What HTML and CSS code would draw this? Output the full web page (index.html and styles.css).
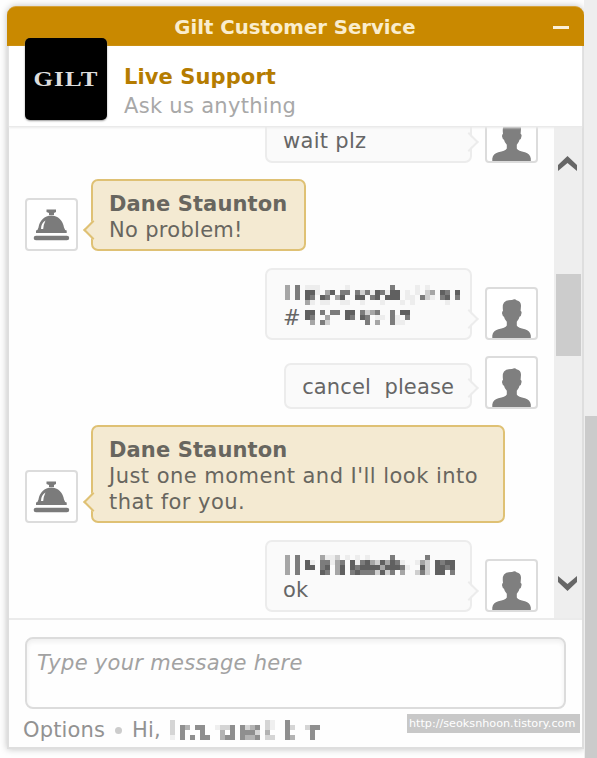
FILE: index.html
```html
<!DOCTYPE html>
<html lang="en">
<head>
<meta charset="utf-8">
<title>Gilt Customer Service</title>
<link rel="stylesheet" href="styles.css">
</head>
<body>
<svg class="defs" width="0" height="0">
  <symbol id="bell" viewBox="0 0 49 49">
    <path fill="#7b7b7b" d="M19.500 9.500h9.500v2.500l-2 1v2h-5v-2l-2.500-1zM9 33v-2.500q2-.5 2.500-3c1-7 6-12 12.800-12S36 20.500 37 27.500q.5 2.500 2.700 3V33z"/>
    <path d="M14 29q0-6 4.500-8.500-2 4-2.300 8.500z" fill="#fff"/>
    <rect x="6.700" y="35.700" width="35.500" height="4.600" rx="2.300" fill="#7b7b7b"/>
  </symbol>
  <symbol id="person" viewBox="0 0 49 49">
    <path fill="#7f7f7f" d="M5.300 49v-2.500q.7-5 6-6.300 7-1.200 8.500-3.700v-3.700q-2.300-2.300-2.800-5-1.500-.5-2-3.500 0-2 1-2.500-.8-6 1-8.300 2-2.500 8-2.500 3-1.500 4.500.2 4.500.8 4.500 5.500l-.4 5.100q1.300.7.900 2.500-.3 3-2 3.500-.5 2.700-2.700 5v3.700q1.500 2.500 8.200 3.700 5 1.300 5.800 6.300V49z"/>
  </symbol>
</svg>
<main class="chat">
  <header class="titlebar"><h1>Gilt Customer Service</h1><span class="minimize"></span></header>
  <section class="intro">
    <div class="logo"><span>GILT</span></div>
    <div class="intro-text"><strong>Live Support</strong><span>Ask us anything</span></div>
  </section>
  <section class="conversation">
    <div class="messages">
      <div class="row visitor"><div class="bubble wait">wait plz</div><div class="avatar"><svg><use href="#person"/></svg></div></div>
      <div class="row agent"><div class="avatar"><svg><use href="#bell"/></svg></div><div class="bubble short"><b>Dane Staunton</b><br><span class="paragraph">No problem!</span></div></div>
      <div class="row visitor"><div class="bubble wide"><svg class="mosaic name" data-rows="3.4.111.....1........4....1.1...../3.4.551.35.44.424154155.1.1.23.54.5/3.4.54.54.35..55.45.555.11.421.45.4/....31.11..11..1...1...1.1......1."></svg><div class="line">#<svg class="mosaic number" data-rows="55.4.44.55.4234..4.55/54..3...54.54.11.41.4/.3.42.......4.3..411."></svg></div></div><div class="avatar"><svg><use href="#person"/></svg></div></div>
      <div class="row visitor"><div class="bubble">cancel&nbsp; please</div><div class="avatar"><svg><use href="#person"/></svg></div></div>
      <div class="row agent"><div class="avatar"><svg><use href="#bell"/></svg></div><div class="bubble long"><b>Dane Staunton</b><br><span class="paragraph">Just one moment and I'll look into<br>that for you.</span></div></div>
      <div class="row visitor"><div class="bubble wide"><svg class="mosaic name last" data-rows="3.4....3112.1.1.1....4......4...../3.4.51.44134.51453253541..132.5455/3.4.55.45.35.545555355541..52.5545/3.4....54.35.454442524.3..242.55.4"></svg><div class="line">ok</div></div><div class="avatar"><svg><use href="#person"/></svg></div></div>
    </div>
    <div class="scrollbar">
      <svg width="20" height="17" viewBox="0 0 20 17"><path d="M0 10 9.500 1 19 10v6L9.500 8 0 16z"/></svg>
      <div class="thumb"></div>
      <svg width="20" height="17" viewBox="0 0 20 17"><path d="M0 1 9.500 9 19 1v6L9.500 16 0 7z"/></svg>
    </div>
  </section>
  <footer class="composer">
    <div class="input">Type your message here</div>
    <div class="options"><span>Options</span><i></i><span>Hi,</span><svg class="mosaic user" data-rows="2..................21..4....../2.43.44..1224.4234.21..42..244/2.4...4...3.4.4442.3...4....4./1.4.4.44..344.4334.22..43...4."></svg></div>
  </footer>
</main>
<div class="watermark">http://seoksnhoon.tistory.com</div>
<aside class="page-scroll"><div></div></aside>
<script src="mosaic.js"></script>
</body>
</html>
```
FILE: styles.css
```css
* { box-sizing: border-box; }
body { margin: 0; width: 597px; height: 758px; overflow: hidden; background: #fefefe; font-family: "DejaVu Sans", sans-serif; display: flex; }
.defs { position: absolute; }
.chat { width: 577px; height: 743px; margin: 6px 1px 0 7px; flex: none; display: flex; flex-direction: column; border-radius: 9px 9px 0 0; box-shadow: 0 0 7px rgba(0,0,0,.25); background: #fefefe; border: 2px solid #dedede; border-top: 0; }
.titlebar { height: 40px; margin: 0 -2px; flex: none; background: #c98900; border-top: 1px solid #d6a23c; border-radius: 9px 9px 0 0; display: grid; grid-template-columns: 1fr 16px; padding-right: 15px; align-items: center; }
h1 { margin: 0 0 0 30px; padding-top: 2px; text-align: center; color: #faedcd; font-size: 19.700px; line-height: 38px; white-space: nowrap; }
.minimize { width: 16px; height: 3px; background: #fbf0d9; margin-top: 1px; }
.intro { height: 81px; flex: none; display: flex; padding-left: 16px; border-bottom: 1px solid #eaeaea; box-shadow: 0 1px 2px #ebebeb; z-index: 1; background: #fff; }
.logo { width: 82px; height: 82px; margin-top: -8px; border-radius: 5px; background: #000; color: #ddd; font: bold 20px/82px "Liberation Serif", serif; text-align: center; box-shadow: 0 1px 2px #999; }
.logo span { display: block; transform: scaleX(1.25); letter-spacing: 1px; }
.intro-text { margin: 17px 0 0 17px; display: flex; flex-direction: column; font-size: 21px; line-height: 29px; color: #a8a8a8; letter-spacing: .3px; }
.intro-text strong { color: #b57c00; letter-spacing: .1px; }
.conversation { height: 491px; display: flex; overflow: hidden; flex: none; }
.messages { width: 545px; padding: 0 16px; margin-top: -17px; display: flex; flex-direction: column; flex: none; }
.row { display: flex; align-items: flex-end; flex: none; }
.row + .row { margin-top: 16px; }
.agent + .visitor { margin-top: 17px; }
.visitor { justify-content: flex-end; }
.avatar { width: 53px; height: 53px; border: 2px solid #dcdcdc; border-radius: 4px; background: #fff; flex: none; }
.avatar svg { display: block; width: 49px; height: 49px; }
.bubble { position: relative; padding: 9px 16px 7px; border: 2px solid #ececec; border-radius: 7px; background: #fafafa; color: #666; font-size: 21px; line-height: 26px; letter-spacing: .12px; white-space: nowrap; }
.agent .bubble { margin-left: 13px; padding: 10px 16px 6px; border-color: #dfc174; background: #f4ead2; color: #68665f; }
.visitor .bubble { margin-right: 13px; }
.bubble::after { content: ""; position: absolute; width: 12px; height: 12px; bottom: 12px; right: -6px; background: linear-gradient(45deg, transparent 50%, #fafafa 50%); border: solid #ececec; border-width: 2px 2px 0 0; transform: rotate(45deg); }
.agent .bubble::after { right: auto; left: -7px; background: #f4ead2; border-color: #dfc174; border-width: 0 0 2px 2px; }
.bubble.wide, .bubble.wait { width: 207px; }
.bubble.wait { letter-spacing: .3px; }
.bubble.short { width: 215px; }
.bubble.long { width: 414px; }
.paragraph { letter-spacing: .47px; }
.short .paragraph { letter-spacing: .3px; }
.mosaic { display: block; shape-rendering: crispEdges; }
.name { width: 175px; height: 20px; margin: 6px 0 0 2px; }
.name.last { margin: 4px 0 2px 2px; }
.line { display: flex; height: 26px; }
.number { width: 130px; height: 15px; margin: 5px 0 0 4px; }
.scrollbar { width: 28px; background: #eee; display: flex; flex-direction: column; align-items: center; justify-content: space-between; padding: 28px 0 26px; fill: #666; }
.thumb { width: 25px; height: 82px; background: #ccc; margin-bottom: 118px; }
.composer { flex: 1; border-top: 2px solid #ebebeb; padding: 17px 16px 0 16px; }
.input { width: 541px; height: 72px; border: 2px solid #dcdcdc; border-radius: 8px; padding: 11px 10px; color: #a2a2a2; font-style: italic; font-size: 21px; line-height: 27px; letter-spacing: .3px; box-shadow: inset 0 3px 4px #f0f0f0; }
.options { display: flex; align-items: center; margin-left: -2px; padding-top: 4px; height: 37px; color: #929292; font-size: 21px; letter-spacing: .15px; white-space: nowrap; }
.options i { width: 7px; height: 7px; border-radius: 50%; background: #ccc; margin: 1px 10px 0; }
.user { width: 155px; height: 20px; margin-left: 9px; opacity: .85; }
.watermark { position: absolute; left: 407px; top: 714px; width: 173px; height: 19px; background: #c8c8c8; color: #fff; font: 11.200px/20px "DejaVu Sans", sans-serif; padding-left: 2px; white-space: nowrap; }
.page-scroll { width: 13px; height: 758px; margin-left: -1px; background: #eee; flex: none; border-left: 1px solid #eee; }
.page-scroll div { height: 342px; margin-top: 416px; background: #cbcbcb; }
```
FILE: mosaic.js
```js
// Each digit is the shade of one 5px tile.
const shades = ['', '#ededed', '#cfcfcf', '#a6a6a6', '#7c7c7c', '#606060'];
document.querySelectorAll('.mosaic').forEach(svg => {
  svg.dataset.rows.split('/').forEach((row, y) => {
    [...row].forEach((shade, x) => {
      if (!shades[shade]) return;
      const tile = document.createElementNS('http://www.w3.org/2000/svg', 'rect');
      tile.setAttribute('x', x * 5);
      tile.setAttribute('y', y * 5);
      tile.setAttribute('width', 5);
      tile.setAttribute('height', 5);
      tile.setAttribute('fill', shades[shade]);
      svg.append(tile);
    });
  });
});
```
